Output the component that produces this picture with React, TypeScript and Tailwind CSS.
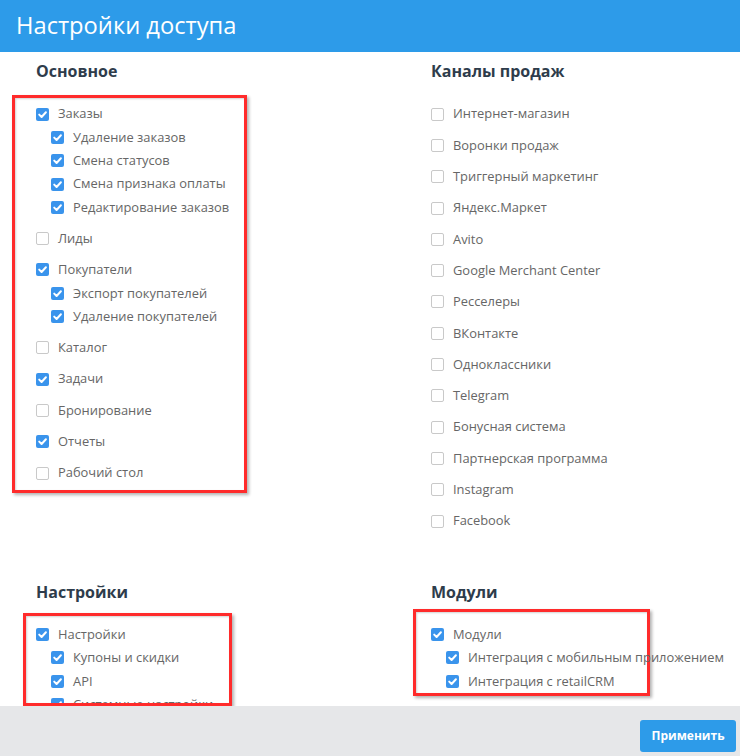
import React from "react";

type Item = { label: string; checked?: boolean; children?: string[] };

const basic: Item[] = [
    {
        label: "Заказы",
        checked: true,
        children: [
            "Удаление заказов",
            "Смена статусов",
            "Смена признака оплаты",
            "Редактирование заказов",
        ],
    },
    { label: "Лиды" },
    {
        label: "Покупатели",
        checked: true,
        children: ["Экспорт покупателей", "Удаление покупателей"],
    },
    { label: "Каталог" },
    { label: "Задачи", checked: true },
    { label: "Бронирование" },
    { label: "Отчеты", checked: true },
    { label: "Рабочий стол" },
];

const channels: Item[] = [
    "Интернет-магазин",
    "Воронки продаж",
    "Триггерный маркетинг",
    "Яндекс.Маркет",
    "Avito",
    "Google Merchant Center",
    "Ресселеры",
    "ВКонтакте",
    "Одноклассники",
    "Telegram",
    "Бонусная система",
    "Партнерская программа",
    "Instagram",
    "Facebook",
].map((label) => ({ label }));

const settings: Item[] = [
    {
        label: "Настройки",
        checked: true,
        children: ["Купоны и скидки", "API", "Системные настройки"],
    },
];

const modules: Item[] = [
    {
        label: "Модули",
        checked: true,
        children: [
            "Интеграция с мобильным приложением",
            "Интеграция с retailCRM",
        ],
    },
];

const Checkbox = ({ checked }: { checked?: boolean }) =>
    checked ? (
        <span className="w-[13px] h-[13px] shrink-0 rounded-[2px] bg-[#3a94ec] grid place-items-center">
            <svg width="13" height="13" viewBox="0 0 13 13">
                <polyline
                    points="3.2,6.6 5.6,9 9.9,4.3"
                    fill="none"
                    stroke="white"
                    strokeWidth="2"
                    strokeLinecap="round"
                    strokeLinejoin="round"
                />
            </svg>
        </span>
    ) : (
        <span className="w-[13px] h-[13px] shrink-0 rounded-[2px] border border-[#c9c9c9] bg-white" />
    );

const Row = ({ label, checked, sub }: { label: string; checked?: boolean; sub?: boolean }) => (
    <div className={`flex items-center gap-[9px] h-[23.3px] whitespace-nowrap ${sub ? "pl-[15px]" : ""}`}>
        <Checkbox checked={checked} />
        <span className="text-[12.9px] text-[#666]">{label}</span>
    </div>
);

const List = ({ items }: { items: Item[] }) => (
    <div className="flex flex-col gap-[8px]">
        {items.map((it) => (
            <div key={it.label} className="flex flex-col">
                <Row label={it.label} checked={it.checked} />
                {it.children?.map((c) => (
                    <Row key={c} label={c} checked={it.checked} sub />
                ))}
            </div>
        ))}
    </div>
);

const Heading = ({ children }: { children: React.ReactNode }) => (
    <h2 className="text-[16px] font-bold leading-[22px] text-[#2e3c4b]">{children}</h2>
);

// red annotation frame
const redBox =
    "border-[3px] border-[#ff2b2b] shadow-[2px_2px_3px_rgba(0,0,0,0.3),inset_1px_1px_2px_rgba(0,0,0,0.18)]";

export default function App() {
    return (
        <div
            className="w-[740px] h-[756px] flex flex-col bg-white overflow-hidden"
            style={{ fontFamily: '"Open Sans", "Noto Sans", sans-serif' }}
        >
            <header className="h-[52px] shrink-0 bg-[#2d9be9] flex items-center pl-[16px]">
                <h1 className="text-[23.7px] text-white leading-none">Настройки доступа</h1>
            </header>

            <main className="flex-1 overflow-hidden pt-[8px] pl-[36px]">
                <div className="grid grid-cols-[395px_1fr] items-start">
                    <div>
                        <Heading>Основное</Heading>
                        <div className={`${redBox} mt-[13px] -ml-[24px] w-[235px] pt-[4.5px] pb-[5px] pl-[21px]`}>
                            <List items={basic} />
                        </div>
                    </div>
                    <div>
                        <Heading>Каналы продаж</Heading>
                        <div className="mt-[20.5px]">
                            <List items={channels} />
                        </div>
                    </div>
                </div>

                <div className="grid grid-cols-[395px_1fr] items-start mt-[48px]">
                    <div>
                        <Heading>Настройки</Heading>
                        <div className={`${redBox} mt-[10px] -ml-[13px] w-[209px] h-[93px] pt-[7.4px] pl-[10px] overflow-hidden`}>
                            <List items={settings} />
                        </div>
                    </div>
                    <div>
                        <Heading>Модули</Heading>
                        <div className={`${redBox} mt-[6px] -ml-[18px] w-[237px] h-[87px] pt-[11.4px] pl-[15px]`}>
                            <List items={modules} />
                        </div>
                    </div>
                </div>
            </main>

            <footer className="h-[50px] shrink-0 bg-[#e6e7e9] flex items-end justify-end pr-[4px] pb-[4px]">
                <button className="w-[96px] h-[32px] rounded-[3px] bg-[#2d9be9] text-white text-[12px] font-bold">
                    Применить
                </button>
            </footer>
        </div>
    );
}
